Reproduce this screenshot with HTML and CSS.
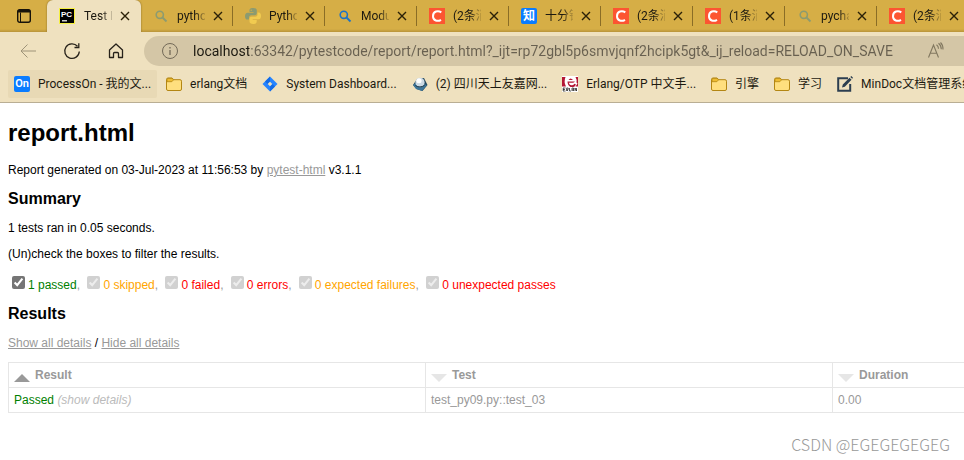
FILE: index.html
```html
<!DOCTYPE html>
<html lang="zh-CN">
<head>
<meta charset="utf-8">
<title>Test Report</title>
<link rel="stylesheet" href="styles.css">
</head>
<body>
<svg class="defs" aria-hidden="true">
  <symbol id="close" viewBox="0 0 10 10"><path d="M1 1l8 8M9 1l-8 8" fill="none" stroke="#2b2108" stroke-width="1.4"/></symbol>
  <symbol id="search" viewBox="0 0 16 16"><circle cx="6.800" cy="6.800" r="3.600" fill="none" stroke="currentColor" stroke-width="1.600"/><path d="M9.500 9.500l4 4" stroke="currentColor" stroke-width="1.800"/></symbol>
  <symbol id="csdn" viewBox="0 0 16 16"><path d="M0 0h16v16H0z" fill="#fc5531"/><path d="M12.300 4.400C9.300 2.300 4 3 4 8.200c0 4.700 4.800 5.600 8 3.600" fill="none" stroke="#fff" stroke-width="2"/></symbol>
  <symbol id="folder" viewBox="0 0 16 16"><path d="M.5 3.500a1.500 1.500 0 0 1 1.500-1.500h4l1.800 1.700H14a1.500 1.500 0 0 1 1.500 1.500v7.800a1.500 1.500 0 0 1-1.500 1.500H2a1.500 1.500 0 0 1-1.500-1.500z" fill="#ffdf7e" stroke="#b38613"/><path d="M1 5.700h4.800l2-2L6 2.400H2Q1 2.500 1 3.500z" fill="#eebc32" stroke="#b38613" stroke-width=".8"/></symbol>
</svg>

<header class="browser">
  <div class="tabstrip">
    <button class="workspace" aria-label="Tab actions">
      <svg width="16" height="16" viewBox="0 0 16 16"><rect x="1.700" y="1.700" width="12.600" height="12.600" rx="2" fill="none" stroke="#17130a" stroke-width="1.400"/><path d="M1.500 3.500Q1.500 1.500 3.500 1.500h9q2 0 2 2V4.500h-13z" fill="#17130a"/><path d="M4.500 4.500v9.500" stroke="#17130a"/></svg>
    </button>
    <div class="tab active">
      <svg class="fav" viewBox="0 0 16 16"><path d="M0 0h16v16H0z" fill="#f5ef40"/><path d="M1 1h14v14H1z"/><path d="M3 12.800h5" stroke="#fff" stroke-width="1.200"/><text x="2" y="9" class="pc">PC</text></svg>
      <span class="label">Test R</span><button class="close" aria-label="Close tab"><svg><use href="#close"/></svg></button>
    </div>
    <div class="tab">
      <svg class="fav muted"><use href="#search"/></svg>
      <span class="label">pytho</span><button class="close" aria-label="Close tab"><svg><use href="#close"/></svg></button>
    </div>
    <div class="tab">
      <svg class="fav" viewBox="0 0 16 16"><path d="M8 0C5 0 4.500 1.200 4.500 2.500V4H8.500v.7H2.500C1 4.700 0 6 0 8.200s1 3.400 2.300 3.400H4V9.500c0-1.300 1-2.300 2.300-2.300h3.500c1.100 0 2-.9 2-2V2.500C11.800 1 10.500 0 8 0z" fill="#8c9b70"/><path d="M8.200 16c3 0 3.500-1.200 3.500-2.500V12H7.700v-.7h6c1.500 0 2.300-1.300 2.300-3.300s-.8-3.500-2.200-3.500H12.500v2c0 1.300-1 2.300-2.300 2.300H6.500c-1.100 0-2 .9-2 2v2.700C4.500 15 5.800 16 8.200 16z" fill="#f1cb50"/><circle cx="6.200" cy="2.300" r=".7" fill="#d6ae46"/></svg>
      <span class="label">Pytho</span><button class="close" aria-label="Close tab"><svg><use href="#close"/></svg></button>
    </div>
    <div class="tab">
      <svg class="fav blue"><use href="#search"/></svg>
      <span class="label">Modu</span><button class="close" aria-label="Close tab"><svg><use href="#close"/></svg></button>
    </div>
    <div class="tab">
      <svg class="fav"><use href="#csdn"/></svg>
      <span class="label">(2条消</span><button class="close" aria-label="Close tab"><svg><use href="#close"/></svg></button>
    </div>
    <div class="tab">
      <span class="fav zhihu">知</span>
      <span class="label">十分钟</span><button class="close" aria-label="Close tab"><svg><use href="#close"/></svg></button>
    </div>
    <div class="tab">
      <svg class="fav"><use href="#csdn"/></svg>
      <span class="label">(2条消</span><button class="close" aria-label="Close tab"><svg><use href="#close"/></svg></button>
    </div>
    <div class="tab">
      <svg class="fav"><use href="#csdn"/></svg>
      <span class="label">(1条消</span><button class="close" aria-label="Close tab"><svg><use href="#close"/></svg></button>
    </div>
    <div class="tab">
      <svg class="fav muted"><use href="#search"/></svg>
      <span class="label">pycha</span><button class="close" aria-label="Close tab"><svg><use href="#close"/></svg></button>
    </div>
    <div class="tab">
      <svg class="fav"><use href="#csdn"/></svg>
      <span class="label">(2条消</span><button class="close" aria-label="Close tab"><svg><use href="#close"/></svg></button>
    </div>
  </div>

  <div class="toolbar">
    <button class="nav" aria-label="Back" disabled><svg viewBox="0 0 18 18"><path d="M17 9H2M8.500 2.500L2 9l6.500 6.500" stroke="#9e9378"/></svg></button>
    <button class="nav" aria-label="Refresh"><svg viewBox="0 0 18 18"><path d="M16.300 9.500A7.300 7.300 0 1 1 14.500 4.300M15.800 1.200v4.300h-4.300" stroke="#27221a" stroke-width="1.300"/></svg></button>
    <button class="nav" aria-label="Home"><svg viewBox="0 0 18 18"><path d="M2.500 8L9 2l6.500 6v7.500h-4v-4a1 1 0 0 0-1-1h-3a1 1 0 0 0-1 1v4h-4z" stroke="#27221a" stroke-width="1.300" stroke-linejoin="round"/></svg></button>
    <div class="address">
      <svg class="info" viewBox="0 0 18 18"><circle cx="9" cy="9" r="7.500" fill="none" stroke="#736a58"/><path d="M9 8v5M9 5v1.500" stroke="#736a58" stroke-width="1.300"/></svg>
      <input type="text" aria-label="Address" value="localhost:63342/pytestcode/report/report.html?_ijt=rp72gbl5p6smvjqnf2hcipk5gt&amp;_ij_reload=RELOAD_ON_SAVE">
      <button class="read" aria-label="Read aloud"><svg viewBox="0 0 18 18"><path d="M1.500 15.500L6.500 3l5 12.500M3.200 11.300h6.600M9.500 2.800q2 1.500 2 4M11.500 1.200q2.800 2.200 2.800 6M13.500.5q2.700 2.500 2.500 7" fill="none" stroke="#81775f" stroke-width="1.100"/></svg></button>
    </div>
  </div>

  <nav class="bookmarks" aria-label="Favorites">
    <a class="mark hover" href="#"><span class="fav processon">On</span><span>ProcessOn - 我的文...</span></a>
    <a class="mark" href="#"><svg class="fav"><use href="#folder"/></svg><span>erlang文档</span></a>
    <a class="mark" href="#"><svg class="fav" viewBox="0 0 16 16"><path d="M8 .5L15.500 8 8 15.500.5 8z" fill="#2684ff"/><path d="M8 .5v5L5.500 8l-2.500-2.500zM8 15.500v-5L10.500 8l2.500 2.500z" fill="#126be8"/><path d="M8 5.700L10.300 8 8 10.300 5.700 8z" fill="#efe1bf"/></svg><span>System Dashboard...</span></a>
    <a class="mark" href="#"><svg class="fav" viewBox="0 0 16 16"><path d="M1 9l4-6 7-1 3.500 7-5 6-6-2z" fill="#24475d"/><path d="M1 9l4-3 10 3-5 6-6-2z" fill="#3d7598"/><ellipse cx="8" cy="6.500" rx="4.600" ry="4.800" fill="#cbd9e4"/><ellipse cx="7" cy="4.800" rx="2.600" ry="2.500" fill="#fff"/><path d="M3.500 9.500q4.500 3 9-.2" fill="none" stroke="#173244"/></svg><span>(2) 四川天上友嘉网...</span></a>
    <a class="mark" href="#"><svg class="fav" viewBox="0 0 16 16"><path d="M0 0h16v16H0z" fill="#fff"/><path d="M0 1h3.500Q1.500 6 4 10.500H0zM6.500 4q2-3 4.500 0zM5.500 5.500H13q-1 1.300-2.500 1.300H6.700q1 3 3.500 2.500 1.500-.2 2.300-1.600l1.500.8q-1 2-2.500 2.500H8.500Q5.500 9 5.500 5.500zM13.500 1H16v9.500h-2.500l2-3-1-1q.5-3-1-5.500z" fill="#b41735"/><path d="M1 12h2.500M1 13.500h2M1 15h2.500M1.200 12v3M4.700 15v-3h1.500v1.500L4.700 14l1.500 1M7.500 12v3h1.500M10 15v-3h1.500v3M10 14h1.500M13 15v-3l1.500 3v-3" stroke="#111" stroke-width=".7" fill="none"/></svg><span>Erlang/OTP 中文手...</span></a>
    <a class="mark" href="#"><svg class="fav"><use href="#folder"/></svg><span>引擎</span></a>
    <a class="mark" href="#"><svg class="fav"><use href="#folder"/></svg><span>学习</span></a>
    <a class="mark" href="#"><svg class="fav" viewBox="0 0 16 16"><path d="M11 2.200H1.200v12.600h12V8" fill="none" stroke="#2c3e50" stroke-width="2"/><path d="M5 11.500l.8-3L12.500 1.800l2 2L7.800 10.700zM13.300 1l1-1L16 1.800l-.8 1z" fill="#2c3e50"/></svg><span>MinDoc文档管理系统</span></a>
  </nav>
</header>

<main class="report">
  <h1>report.html</h1>
  <p>Report generated on 03-Jul-2023 at 11:56:53 by <a href="#">pytest-html</a> v3.1.1</p>
  <h2>Summary</h2>
  <p>1 tests ran in 0.05 seconds.</p>
  <p>(Un)check the boxes to filter the results.</p>
  <div class="filters">
    <input type="checkbox" id="passed" checked><label for="passed" class="passed">1 passed</label>,
    <input type="checkbox" id="skipped" checked disabled><label for="skipped" class="skipped">0 skipped</label>,
    <input type="checkbox" id="failed" checked disabled><label for="failed" class="failed">0 failed</label>,
    <input type="checkbox" id="errors" checked disabled><label for="errors" class="failed">0 errors</label>,
    <input type="checkbox" id="xfailed" checked disabled><label for="xfailed" class="skipped">0 expected failures</label>,
    <input type="checkbox" id="xpassed" checked disabled><label for="xpassed" class="failed">0 unexpected passes</label>
  </div>
  <h2>Results</h2>
  <p><a href="#">Show all details</a> / <a href="#">Hide all details</a></p>
  <table>
    <colgroup><col class="col-result"><col class="col-test"><col></colgroup>
    <thead>
      <tr><th class="asc">Result</th><th>Test</th><th>Duration</th></tr>
    </thead>
    <tbody>
      <tr><td><span class="passed">Passed</span> <a class="expander" href="#">(show details)</a></td><td>test_py09.py::test_03</td><td>0.00</td></tr>
    </tbody>
  </table>
</main>
<div class="watermark">CSDN @EGEGEGEGEG</div>
</body>
</html>
```
FILE: styles.css
```css
* { box-sizing: border-box; }

body {
  margin: 0;
  min-height: 100vh;
  position: relative;
  overflow: hidden;
  background: #fff;
  font-family: "Liberation Sans", Arial, sans-serif;
  font-size: 12px;
}

.defs { position: absolute; width: 0; height: 0; }

button {
  border: 0;
  padding: 0;
  background: none;
  display: flex;
  align-items: center;
  justify-content: center;
}

.browser {
  background: #efe1bf;
  border-bottom: 1px solid #b9ae94;
  font-family: Roboto, "Noto Sans CJK SC", sans-serif;
  color: #1c1910;
}

/* Tabs */
.tabstrip {
  display: flex;
  height: 32px;
  overflow: hidden;
  background: linear-gradient(#d6ae46 29px, #b8943a);
}
.workspace { flex: none; width: 47px; }
.tab {
  flex: none;
  display: flex;
  align-items: center;
  width: 92px;
  height: 32px;
  padding-left: 12px;
  background: linear-gradient(#8a6d26, #8a6d26) right 6px / 1px 20px no-repeat;
}
.tab.active {
  width: 94px;
  background: #efe1bf;
  border-radius: 6px 6px 0 0;
  box-shadow: 0 0 2px #7d6222;
}
.fav { flex: none; display: block; width: 16px; height: 16px; }
.muted { color: #8c9b70; }
.blue { color: #1a73c8; }
.pc { font: bold 8px "Liberation Sans", sans-serif; fill: #fff; }
.label {
  flex: none;
  width: 28px;
  margin-left: 8px;
  overflow: hidden;
  white-space: nowrap;
  line-height: 20px;
  mask-image: linear-gradient(90deg, #000 18px, transparent 30px);
}
.active .label { margin-left: 9px; }
.close { width: 10px; height: 20px; margin-left: 8px; }
.close svg { width: 10px; height: 10px; }
.zhihu, .processon {
  border-radius: 2px;
  background: #0a7cff;
  color: #fff;
  font-size: 12px;
  font-weight: 600;
  line-height: 16px;
  text-align: center;
}
.processon { font-size: 11px; }

/* Toolbar */
.toolbar {
  display: flex;
  align-items: center;
  height: 38px;
  padding-left: 8px;
}
.nav { flex: none; width: 40px; height: 32px; margin-right: 4px; }
.nav svg { width: 18px; height: 18px; fill: none; }
.address {
  flex: 1;
  display: flex;
  align-items: center;
  height: 30px;
  margin-left: 4px;
  padding: 0 19px 0 17px;
  border-radius: 15px 0 0 15px;
  background: #d4c6a6;
}
.info { flex: none; width: 18px; height: 18px; }
.address input {
  flex: 1;
  min-width: 0;
  height: 24px;
  margin-left: 14px;
  padding: 0;
  border: 0;
  outline: 0;
  background: linear-gradient(90deg, #1c1910 56px, #686050 56px);
  background-clip: text;
  color: transparent;
  font: 14px Roboto, sans-serif;
}
.read svg { width: 18px; height: 18px; }

/* Favorites bar */
.bookmarks {
  display: flex;
  gap: 3px;
  height: 32px;
  padding: 0 8px 4px;
  overflow: hidden;
}
.mark {
  flex: none;
  display: flex;
  align-items: center;
  gap: 8px;
  padding: 0 6px;
  border-radius: 2px;
  color: inherit;
  line-height: 18px;
  text-decoration: none;
  white-space: nowrap;
}
.hover { background: #e8d9b5; }

/* Report */
.report { padding: 16px 0 0 8px; color: #999; }
.report h1 { margin: 0 0 17px; font-size: 24px; line-height: 27px; color: #000; }
.report h2 { margin: 13px 0; font-size: 16px; line-height: 18px; color: #000; }
.report p { margin: 12px 0; line-height: 14px; color: #000; }
.report a { color: #999; }
.filters { line-height: 14px; white-space: nowrap; }
.filters input { margin: 3px 3px 3px 4px; accent-color: #757575; }
.passed { color: green; }
.skipped { color: orange; }
.failed { color: red; }

table {
  width: 100%;
  table-layout: fixed;
  border-collapse: collapse;
  line-height: 14px;
}
.col-result { width: 417px; }
.col-test { width: 407px; }
th, td { padding: 5px; border: 1px solid #e6e6e6; text-align: left; }
th:last-child, td:last-child { border-right: 0; }
th::before {
  content: "";
  display: inline-block;
  margin-right: 5px;
  vertical-align: -3px;
  border: 8px solid transparent;
  border-top-color: #e6e6e6;
  border-bottom: 0;
}
th.asc::before {
  border-top: 0;
  border-bottom: 8px solid #999;
}
.report .expander { color: #bbb; font-style: italic; text-decoration: none; }

.watermark {
  position: absolute;
  right: 14px;
  bottom: 4px;
  color: #999;
  font: 300 16px "Noto Sans CJK SC", sans-serif;
}
```
